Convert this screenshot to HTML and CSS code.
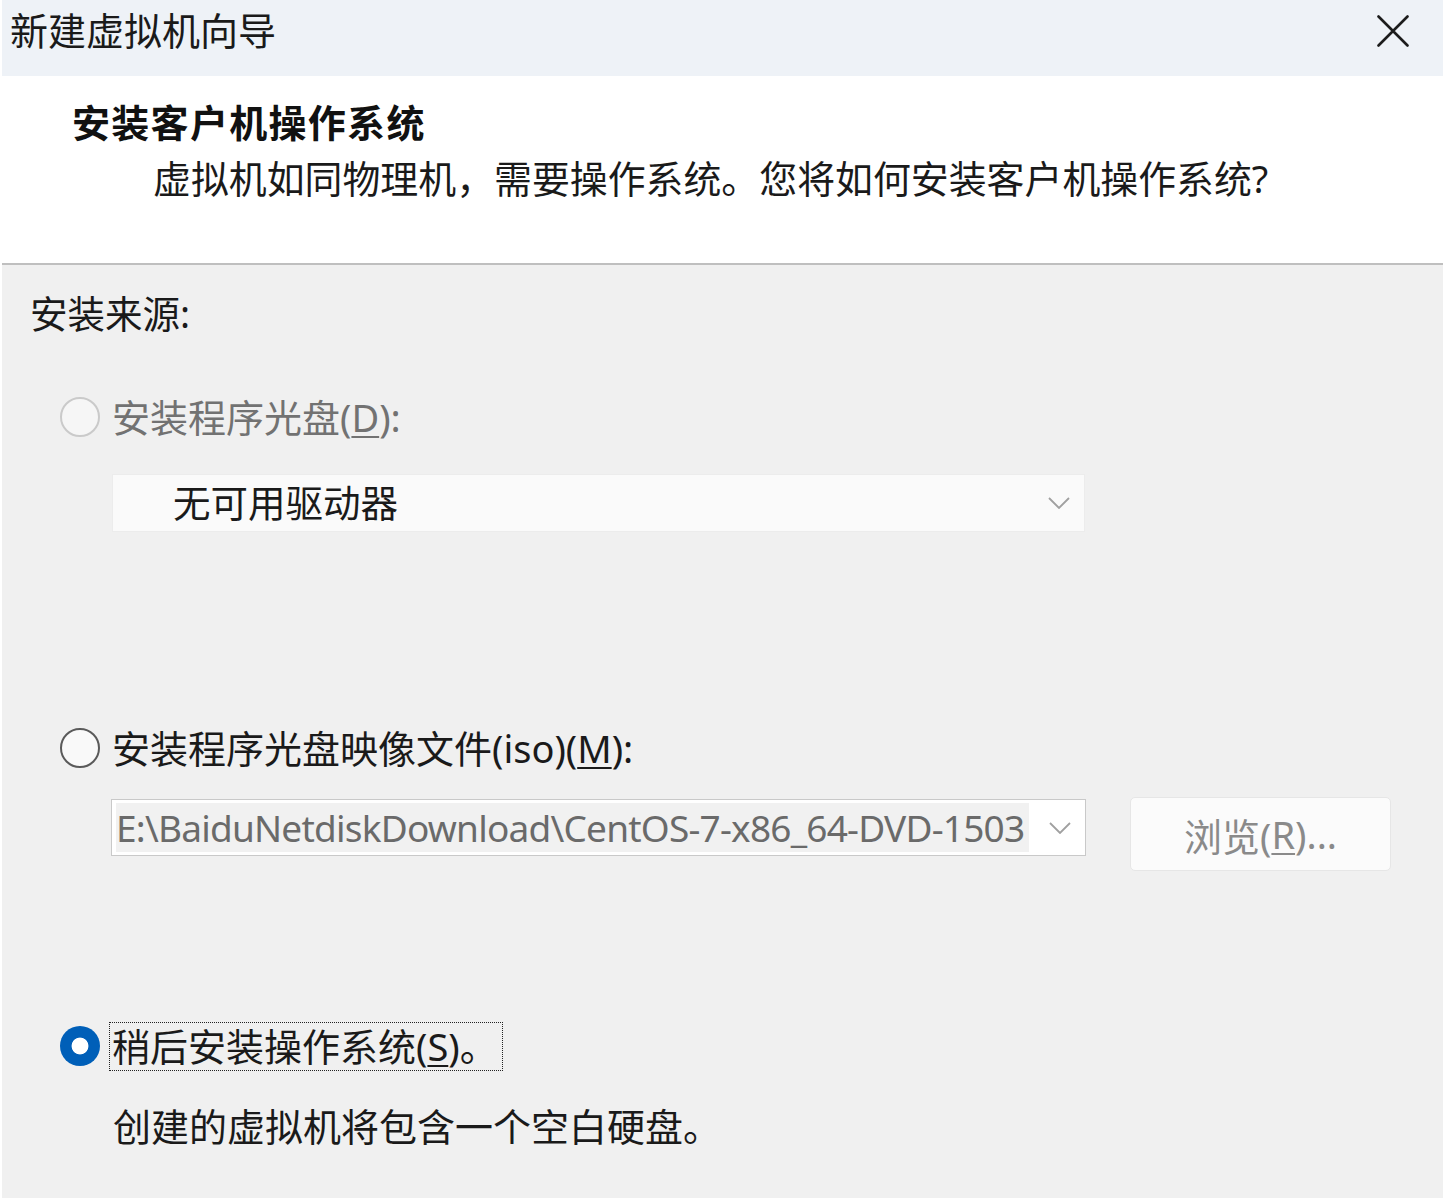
FILE: index.html
```html
<!DOCTYPE html>
<html lang="zh-CN">
<head>
<meta charset="utf-8">
<title>新建虚拟机向导</title>
<link rel="stylesheet" href="styles.css">
</head>
<body>
<div class="dialog">
  <div class="titlebar">
    <span class="title">新建虚拟机向导</span>
    <span class="close">
      <svg width="32" height="32" viewBox="0 0 32 32"><path d="M1.5 1.5 L30.5 30.5 M30.5 1.5 L1.5 30.5" stroke="#1c1c1c" stroke-width="2.6" stroke-linecap="round" fill="none"/></svg>
    </span>
  </div>
  <div class="header">
    <div class="heading">安装客户机操作系统</div>
    <div class="subtitle">虚拟机如同物理机，需要操作系统。您将如何安装客户机操作系统?</div>
  </div>
  <div class="sep"></div>
  <div class="content">
    <div class="group-label">安装来源:</div>

    <div class="radio-row row-disc">
      <span class="radio disabled"></span>
      <span class="label label-disabled">安装程序光盘(<u>D</u>):</span>
    </div>
    <div class="select select-disabled">
      <span class="select-text">无可用驱动器</span>
      <svg class="chev" width="22" height="12" viewBox="0 0 22 12"><path d="M1 1 L11 11 L21 1" stroke="#a0a0a0" stroke-width="1.8" fill="none"/></svg>
    </div>

    <div class="radio-row row-iso">
      <span class="radio"></span>
      <span class="label">安装程序光盘映像文件(iso)(<u>M</u>):</span>
    </div>
    <div class="iso-row">
      <div class="select select-iso">
        <span class="path-text"><span class="path-inner">E:\BaiduNetdiskDownload\CentOS-7-x86_64-DVD-1503</span></span>
        <svg class="chev" width="22" height="12" viewBox="0 0 22 12"><path d="M1 1 L11 11 L21 1" stroke="#a0a0a0" stroke-width="1.8" fill="none"/></svg>
      </div>
      <div class="browse">浏览(<u>R</u>)...</div>
    </div>

    <div class="radio-row row-later">
      <span class="radio checked"></span>
      <span class="label focus">稍后安装操作系统(<u>S</u>)。</span>
    </div>
    <div class="note">创建的虚拟机将包含一个空白硬盘。</div>
  </div>
</div>
</body>
</html>
```
FILE: styles.css
```css
* { box-sizing: border-box; }
html, body { margin: 0; padding: 0; background: #ffffff; }
body {
  font-family: "Noto Sans", "Noto Sans CJK SC", sans-serif;
  color: #1a1a1a;
}
.dialog {
  margin-left: 2px;
  width: 1441px;
  height: 1198px;
  display: flex;
  flex-direction: column;
  background: #f0f0f0;
}
.titlebar {
  height: 76px;
  background: #eef2f7;
  display: flex;
  align-items: flex-start;
  justify-content: space-between;
  padding: 8px 34px 0 8px;
}
.title {
  font-size: 38px;
  line-height: 44px;
  color: #1a1a1a;
}
.close {
  display: flex;
  margin-top: 7px;
}
.header {
  height: 187px;
  background: #ffffff;
  padding: 21px 0 0 70px;
}
.heading {
  font-size: 38px;
  line-height: 50px;
  font-weight: bold;
  letter-spacing: 1.3px;
  color: #111;
}
.subtitle {
  margin-top: 6px;
  margin-left: 81px;
  font-size: 37.9px;
  line-height: 50px;
  color: #1a1a1a;
}
.sep {
  height: 2px;
  background: #bfbfbf;
}
.content {
  flex: 1;
  padding: 24px 0 0 30px;
}
.group-label {
  margin-left: -2px;
  font-size: 37.5px;
  line-height: 50px;
  height: 50px;
}
.radio-row {
  display: flex;
  align-items: center;
  height: 50px;
  padding-left: 28px;
}
.row-disc { margin-top: 53px; }
.row-iso { margin-top: 191px; }
.row-later { margin-top: 150px; }
.radio {
  width: 40px;
  height: 40px;
  border-radius: 50%;
  border: 2px solid #5a5a5a;
  background: #f9f9f9;
  flex: none;
}
.radio.disabled {
  border-color: #cacaca;
  background: #f6f6f6;
}
.radio.checked {
  border: none;
  background: radial-gradient(circle, #ffffff 0 8px, #005fb8 8.8px);
}
.label {
  margin-left: 12px;
  font-size: 38px;
  line-height: 48px;
  white-space: nowrap;
}
.label-disabled { color: #727272; }
.focus {
  margin-left: 9px;
  padding: 0 0 0 3px;
  width: 394px;
  height: 49px;
  outline: 1px dotted #222;
  outline-offset: -1px;
}
u { text-decoration-thickness: 2px; text-underline-offset: 4px; }
.select {
  display: flex;
  align-items: center;
  justify-content: space-between;
}
.select-disabled {
  margin-left: 80px;
  margin-top: 32px;
  width: 973px;
  height: 58px;
  background: #fafafa;
  border: 1px solid #ececec;
  padding: 0 14px 0 60px;
}
.select-text {
  font-size: 37.5px;
  line-height: 48px;
  color: #1a1a1a;
}
.iso-row {
  display: flex;
  align-items: flex-start;
  margin-top: 24px;
}
.select-iso {
  margin-left: 79px;
  margin-top: 2px;
  width: 975px;
  height: 57px;
  background: #ffffff;
  border: 1px solid #c9c9c9;
  padding: 0 14px 0 4px;
}
.path-text {
  width: 913px;
  overflow: hidden;
  height: 49px;
  background: #f1f1f1;
  display: flex;
  align-items: center;
}
.path-inner {
  font-size: 37px;
  line-height: 48px;
  color: #6a6a6a;
  white-space: nowrap;
  letter-spacing: -0.78px;
}
.browse {
  margin-left: 44px;
  width: 261px;
  height: 74px;
  border: 1px solid #e6e6e6;
  border-radius: 5px;
  background: #fbfbfb;
  display: flex;
  align-items: center;
  justify-content: center;
  font-size: 38px;
  color: #8a8a8a;
}
.note {
  margin-top: 30px;
  margin-left: 81px;
  font-size: 38px;
  line-height: 50px;
}
```
